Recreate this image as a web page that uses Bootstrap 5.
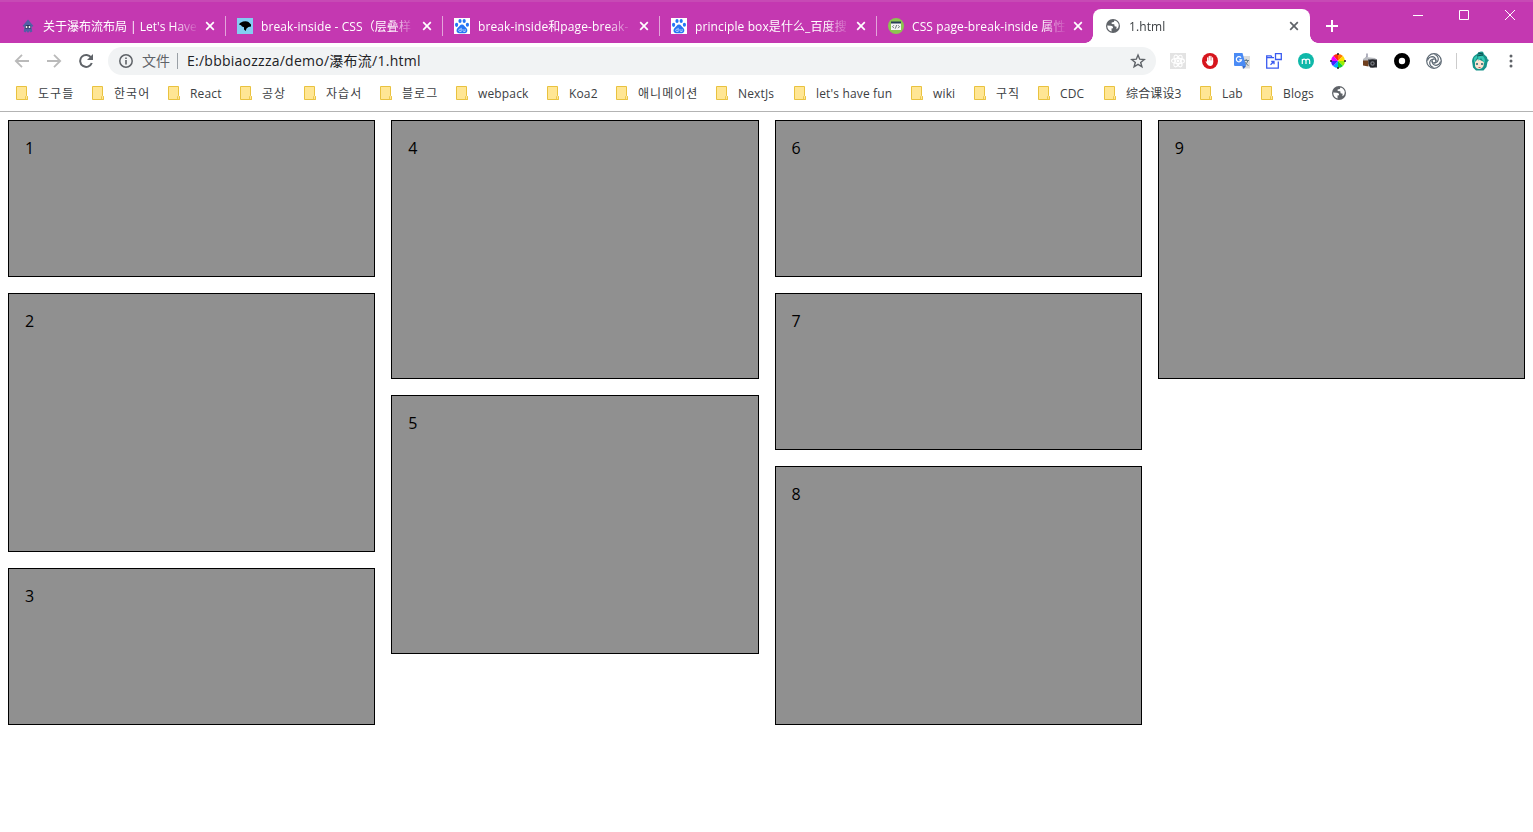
<!DOCTYPE html>
<html lang="zh-CN">
<head>
<meta charset="utf-8">
<title>1.html</title>
<link href="https://cdn.jsdelivr.net/npm/bootstrap@5.3.0/dist/css/bootstrap.min.css" rel="stylesheet">
<style>
body{font-family:"Open Sans","Noto Sans CJK SC",sans-serif;font-size:12px;color:#3c4043;height:832px;overflow:hidden;background:#fff}
svg{display:block;flex:none}
.tabstrip{height:43px;background:#c438b1;border-top:2px solid #c74ab5;padding:7px 0 0 9px}
.tab{width:217px;height:34px;padding:0 9px 0 11px;color:#fff;position:relative}
.tab .title{width:155px;margin:2px 6px 0 8px;letter-spacing:.1px;white-space:nowrap;overflow:hidden;line-height:20px;-webkit-mask-image:linear-gradient(90deg,#000 84%,transparent);mask-image:linear-gradient(90deg,#000 84%,transparent)}
.tab .title.snug{letter-spacing:0;margin-left:7px;width:156px}
.tab.split::after{content:"";position:absolute;right:0;top:7px;width:1px;height:20px;background:#e3a5da}
.tab.current{background:#fff;color:#3c4043;border-radius:8px 8px 0 0;margin-left:-1px;padding-left:12px}
.tab.current::before,.tab.current::after{content:"";position:absolute;bottom:0;width:8px;height:8px}
.tab.current::before{left:-8px;background:radial-gradient(circle at 0 0,transparent 7.5px,#fff 8px)}
.tab.current::after{right:-8px;background:radial-gradient(circle at 100% 0,transparent 7.5px,#fff 8px)}
.tab.current .title{width:154px}
.tab.current .closer{color:#5f6368}
.winctl{gap:30px;margin:-1px 15px 0 auto}
.toolbar{height:36px;padding:0 13px}
.reload{margin-left:14px}
.omnibox{width:1048px;height:28px;border-radius:14px;background:#f1f3f4;margin-left:14px;padding:0 10px;font-size:14px;color:#5f6368}
.omnibox .url{color:#202124;letter-spacing:.25px;margin-top:-1px}
.omnibox .scheme{margin:-2px 0 0 8px}
.omnibox .rule{width:1px;height:16px;background:#9aa0a6;margin:0 9px 0 7px}
.exts{gap:16px;margin-left:14px}
.sep{width:1px;height:16px;margin:0 14px;background:#ccc}
.dots{margin-left:20px}
.bookmarks{height:33px;border-bottom:1px solid #b3b3b3;padding:0 0 4px 15px;display:grid;align-items:center;grid-template-columns:76px 76px 72px 64px 76px 76px 91px 69px 100px 78px 117px 63px 64px 66px 96px 61px 71px 20px}
.bookmarks>div{display:flex;align-items:center;white-space:nowrap;gap:9px;line-height:20px}
.bookmarks span{padding-top:2px;letter-spacing:.15px}
.ko{font-family:"Open Sans","Noto Sans CJK KR",sans-serif}
.bookmarks .ko span{letter-spacing:1.05px}
.fall{gap:16px}
.fall>div{flex:1 1 0}
.tile{height:157px;background:#909090;border:1px solid #000;margin-bottom:16px;padding:16px;font-size:16px;line-height:22px;color:#000}
.tile.tall{height:259px}
</style>
</head>
<body>
<svg width="0" height="0" class="position-absolute">
<defs>
<symbol id="x" viewBox="0 0 10 10"><path d="M1.200 1.200l7.600 7.600M8.800 1.200L1.200 8.800" stroke="currentColor" stroke-width="1.700"/></symbol>
<symbol id="globe" viewBox="0 0 14 14"><circle cx="7" cy="7" r="7" fill="#5f6368"/><path d="M1.200 6.600 4.800 6.700Q7.400 7 7 9.200L5.500 9.500 5.600 12.600Q1.400 11.500 1.200 6.600ZM8.400 1.400 7.800 3 5.600 3.400 5.700 5.100 8.300 5.200 8.600 7.200 10.600 7.700 10.400 10.300Q13 9 12.700 5.500 12 2.300 8.400 1.400Z" fill="#fff"/></symbol>
<symbol id="folder" viewBox="0 0 14 16"><path d="M1.500 1.500h10v9l1 1v3h-11z" fill="#ffe694" stroke="#e9c23f"/><path d="M10.500 14.500v-3l1-1 1 1v3z" fill="#ffe694" stroke="#e9c23f" stroke-width=".8"/></symbol>
<symbol id="paw" viewBox="0 0 16 16"><path fill="#fff" d="M0 0h16v16H0z"/><g fill="#2475f5"><ellipse cx="2.600" cy="6.800" rx="1.600" ry="2.100"/><ellipse cx="6" cy="3" rx="1.600" ry="2.100"/><ellipse cx="10.200" cy="3" rx="1.600" ry="2.100"/><ellipse cx="13.400" cy="6.800" rx="1.600" ry="2"/><path d="M8 6.400c2 0 2.600 2 4.100 3.400 1.900 1.500 1.700 5.400-1.300 5.400H5.100c-3 0-3.200-3.700-1.300-5.400C5.300 8.400 6 6.400 8 6.400z"/></g><path d="M7.200 9.800v3.700H5.900a1.100 1.100 0 0 1 0-2.400h1.300M9 11v1.500q0 1 1 1h1.100V11" stroke="#fff" fill="none" stroke-width=".6"/></symbol>
</defs>
</svg>

<header>
<div class="tabstrip d-flex">
  <div class="tab split d-flex align-items-center">
    <svg width="16" height="16" viewBox="0 0 16 16"><path d="M8 1.500 13.500 8l-2 1 .8 4.500-1.800 1-1-1.500-1 1.500h-1l-1-1.500-1 1.500-1.800-1L4.500 9l-2-1z" fill="#5260a6"/><path d="M5 8q3-2 6 0v2.500H5z" fill="#283154"/><circle cx="6.500" cy="9" r="1" fill="#fff"/><circle cx="9.500" cy="9" r="1" fill="#fff"/></svg>
    <div class="title snug">关于瀑布流布局 | Let's Have</div><svg class="closer" width="10" height="10"><use href="#x"/></svg>
  </div>
  <div class="tab split d-flex align-items-center">
    <svg width="16" height="16" viewBox="0 0 16 16"><path fill="#83cdf2" d="M0 0h16v16H0z"/><path d="M2 6.500 3 5l3-1.500q3.500-.8 5.500.5l2.500 2.500v2L11.500 9l-2 1.500-.8 2.500-1.700-1.500V9.300L5 8.500 4 7.300z"/></svg>
    <div class="title">break-inside - CSS（层叠样</div><svg class="closer" width="10" height="10"><use href="#x"/></svg>
  </div>
  <div class="tab split d-flex align-items-center">
    <svg width="16" height="16"><use href="#paw"/></svg>
    <div class="title">break-inside和page-break-</div><svg class="closer" width="10" height="10"><use href="#x"/></svg>
  </div>
  <div class="tab split d-flex align-items-center">
    <svg width="16" height="16"><use href="#paw"/></svg>
    <div class="title">principle box是什么_百度搜</div><svg class="closer" width="10" height="10"><use href="#x"/></svg>
  </div>
  <div class="tab d-flex align-items-center">
    <svg width="16" height="16" viewBox="0 0 16 16"><circle cx="8" cy="8" r="8" fill="#8cc450"/><path fill="#f5f5f5" d="M3 4h10v8H3z"/><path fill="#263d55" d="M3 3.500h10v2H3z"/><path d="M6 7.200 4.500 8.700 6 10.200M10 7.200 11.500 8.700 10 10.200M8.600 7l-1.200 3.600" stroke="#455" fill="none" stroke-width=".8"/></svg>
    <div class="title">CSS page-break-inside 属性</div><svg class="closer" width="10" height="10"><use href="#x"/></svg>
  </div>
  <div class="tab current d-flex align-items-center">
    <svg width="16" height="16" viewBox="-1 -1 16 16"><use href="#globe" width="14" height="14"/></svg>
    <div class="title">1.html</div><svg class="closer" width="10" height="10"><use href="#x"/></svg>
  </div>
  <svg class="ms-3" width="12" height="34" viewBox="0 0 12 34"><path d="M6 11v12M0 17h12" stroke="#fff" stroke-width="2"/></svg>
  <div class="winctl d-flex">
    <svg width="16" height="16" viewBox="0 0 16 16"><path d="M3 7.500h10" stroke="#fff"/></svg>
    <svg width="16" height="16" viewBox="0 0 16 16"><path d="M3.500 2.500h9v9h-9z" stroke="#fff" fill="none"/></svg>
    <svg width="16" height="16" viewBox="0 0 16 16"><path d="M3 2l10 10M13 2 3 12" stroke="#fff"/></svg>
  </div>
</div>

<div class="toolbar d-flex align-items-center">
  <svg width="18" height="16" viewBox="0 0 18 16"><path d="M16 8H3M9 1.800 2.800 8 9 14.200" fill="none" stroke="#bababa" stroke-width="1.800"/></svg>
  <svg class="ms-3" width="18" height="16" viewBox="0 0 18 16"><path d="M0 8h13M7 1.800 13.200 8 7 14.200" fill="none" stroke="#bababa" stroke-width="1.800"/></svg>
  <svg class="reload" width="15" height="16" viewBox="1 0 15 16"><path d="M13.200 4.600A6 6 0 1 0 13.800 10" fill="none" stroke="#5f6368" stroke-width="2"/><path d="M15 1v6H9z" fill="#5f6368"/></svg>
  <div class="omnibox d-flex align-items-center">
    <svg width="16" height="16" viewBox="0 0 16 16"><circle cx="8" cy="8" r="6.200" fill="none" stroke="#5f6368" stroke-width="1.500"/><path d="M8 7v4.500M8 4.500V6" stroke="#5f6368" stroke-width="1.600"/></svg>
    <span class="scheme">文件</span><span class="rule"></span><span class="url">E:/bbbiaozzza/demo/瀑布流/1.html</span>
    <svg class="ms-auto" width="16" height="16" viewBox="0 0 16 16"><path d="M8 2l1.700 4.200 4.500.3-3.500 2.900 1.200 4.400L8 11.400l-3.900 2.400 1.200-4.400-3.500-2.900 4.500-.3z" fill="none" stroke="#5f6368" stroke-width="1.400"/></svg>
  </div>
  <div class="exts d-flex align-items-center">
    <svg width="16" height="16" viewBox="0 0 16 16"><path fill="#e3e3e3" d="M0 0h16v16H0z"/><g fill="none" stroke="#fff" stroke-width="1.100"><ellipse cx="8" cy="8" rx="6.500" ry="2.600"/><ellipse cx="8" cy="8" rx="6.500" ry="2.600" transform="rotate(60 8 8)"/><ellipse cx="8" cy="8" rx="6.500" ry="2.600" transform="rotate(120 8 8)"/></g><circle cx="8" cy="8" r="1.400" fill="#fff"/></svg>
    <svg width="16" height="16" viewBox="0 0 16 16"><circle cx="8" cy="8" r="8" fill="#d6151d"/><path d="M5.700 9V4.800M7.300 8V3.300M8.900 8V3.500M10.500 9V4.800" stroke="#fff" stroke-width="1.300" stroke-linecap="round"/><path d="M5 7.500h6.200v2.200q-.4 3.300-3 3.300-2 0-3-1.800L3.500 8.500q.8-.7 1.500.2z" fill="#fff"/></svg>
    <svg width="16" height="16" viewBox="0 0 16 16"><path fill="#dcdcdc" d="M6 3h10v12.500H8z"/><path d="M9.500 7.500h5.500M12.200 6v1.500M14 7.500q-1 3.500-4 5M10.500 8.500q1.500 3 4 4" stroke="#667d86" fill="none"/><path fill="#4a8bf5" d="M0 0h8.500l3.500 13H1q-1 0-1-1z"/><path fill="#3469c8" d="M8.300 13H12L9.600 16z"/><path d="M7 4.600A2.600 2.600 0 1 0 7.500 6.800H5.200" fill="none" stroke="#fff" stroke-width="1.200"/></svg>
    <svg width="16" height="16" viewBox="0 0 16 16"><g fill="none" stroke="#3a5bf0" stroke-width="1.300"><path d="M8 4.600H6L5 2.800H.7v12.400h11.600V8.500M.7 4.600H6M9.500.7h5.800v5.800H9.500zM4.500 11.800l3.200-3M5.200 8.500h2.800v2.800"/></g></svg>
    <svg width="16" height="16" viewBox="0 0 16 16"><circle cx="8" cy="8" r="8" fill="#0fb8a9"/><path d="M4.300 11V6M4.300 8q0-1.800 1.800-1.800T8 8v3M8 8q0-1.800 1.800-1.800T11.700 8v3" stroke="#fff" stroke-width="1.200" fill="none"/></svg>
    <svg width="16" height="16" viewBox="0 0 16 16"><path d="M8 8V1Q5 .8 3.400 2.800z" fill="#ff2b10"/><path d="M8 8 8 1q3 0 5 2z" fill="#ff7b00"/><path d="M8 8l5-5q2 2 2 5z" fill="#fd0"/><path d="M8 8h7q0 3-2 5z" fill="#9e0"/><path d="M8 8l5 5q-2 2-5 2z" fill="#1c3"/><path d="M8 8v7q-3 0-5-2z" fill="#0af"/><path d="M8 8l-5 5q-2-2-2-5z" fill="#42f"/><path d="M8 8H1q0-3 2.400-5.200z" fill="#e0f"/><path d="M8 0v2M8 14v2M0 8h2M14 8h2" stroke="#222" stroke-width="1.500"/></svg>
    <svg width="16" height="16" viewBox="0 0 16 16"><path d="M5 .5v3l-1 1.500" stroke="#99a" stroke-width="1.500" fill="none"/><path fill="#b9bbc0" d="M1 6l3-2 9 1 2 2v4H1z"/><path fill="#70401f" d="M1 7.500h5.500v6L1 12.500z"/><path fill="#303238" d="M6 6.500h9v8H8z"/><circle cx="10.500" cy="10.500" r="4" fill="#24262a"/><circle cx="10.500" cy="10.500" r="2.200" fill="#777a82"/><circle cx="10.500" cy="10.500" r="1" fill="#222"/></svg>
    <svg width="16" height="16" viewBox="0 0 16 16"><circle cx="8" cy="8" r="5.600" fill="none" stroke="#000" stroke-width="4.800"/></svg>
    <svg width="16" height="16" viewBox="0 0 16 16"><g fill="none" stroke="#5c6873" stroke-width="1.200"><circle cx="8" cy="8" r="7.300"/><circle cx="8" cy="8" r="2"/><path id="arm" d="M10 8Q9.600 3.800 6 3.700 2.600 4 1.500 7.500"/><use href="#arm" transform="rotate(90 8 8)"/><use href="#arm" transform="rotate(180 8 8)"/><use href="#arm" transform="rotate(270 8 8)"/></g></svg>
  </div>
  <div class="sep"></div>
  <svg width="18" height="20" viewBox="0 0 18 20"><path d="M6 3Q8-.5 12 .8l1 2.500q3 2 3.500 5L18 9l-1.500 2-1 5-3 3.500H5L2 16.500 1 10Q1.500 5 6 3z" fill="#17948a"/><path d="M4 11l3-3 6 3-.5 4Q11 18 8 18T4 15z" fill="#fde3d0"/><path d="M3 12l4-7 .5 5L10 7l3.500 5.500.5-3Q13 4 9 4T3 7z" fill="#35c9b4"/><path d="M6 12v2M11 12v2" stroke="#236b70" stroke-width="1.500"/><path d="M7 2l5 1M6 5l6-1" stroke="#0b4f50"/><path d="M7.500 16.500h2" stroke="#b55"/></svg>
  <svg class="dots" width="4" height="16" viewBox="0 0 4 16"><g fill="#5f6368"><circle cx="2" cy="3" r="1.500"/><circle cx="2" cy="8" r="1.500"/><circle cx="2" cy="13" r="1.500"/></g></svg>
</div>

<nav class="bookmarks">
  <div class="ko"><svg width="14" height="16"><use href="#folder"/></svg><span>도구들</span></div>
  <div class="ko"><svg width="14" height="16"><use href="#folder"/></svg><span>한국어</span></div>
  <div><svg width="14" height="16"><use href="#folder"/></svg><span>React</span></div>
  <div class="ko"><svg width="14" height="16"><use href="#folder"/></svg><span>공상</span></div>
  <div class="ko"><svg width="14" height="16"><use href="#folder"/></svg><span>자습서</span></div>
  <div class="ko"><svg width="14" height="16"><use href="#folder"/></svg><span>블로그</span></div>
  <div><svg width="14" height="16"><use href="#folder"/></svg><span>webpack</span></div>
  <div><svg width="14" height="16"><use href="#folder"/></svg><span>Koa2</span></div>
  <div class="ko"><svg width="14" height="16"><use href="#folder"/></svg><span>애니메이션</span></div>
  <div><svg width="14" height="16"><use href="#folder"/></svg><span>NextJs</span></div>
  <div><svg width="14" height="16"><use href="#folder"/></svg><span>let's have fun</span></div>
  <div><svg width="14" height="16"><use href="#folder"/></svg><span>wiki</span></div>
  <div class="ko"><svg width="14" height="16"><use href="#folder"/></svg><span>구직</span></div>
  <div><svg width="14" height="16"><use href="#folder"/></svg><span>CDC</span></div>
  <div><svg width="14" height="16"><use href="#folder"/></svg><span>综合课设3</span></div>
  <div><svg width="14" height="16"><use href="#folder"/></svg><span>Lab</span></div>
  <div><svg width="14" height="16"><use href="#folder"/></svg><span>Blogs</span></div>
  <div><svg width="16" height="16" viewBox="-1 -1 16 16"><use href="#globe" width="14" height="14"/></svg></div>
</nav>
</header>

<main class="fall d-flex p-2">
  <div><div class="tile">1</div><div class="tile tall">2</div><div class="tile">3</div></div>
  <div><div class="tile tall">4</div><div class="tile tall">5</div></div>
  <div><div class="tile">6</div><div class="tile">7</div><div class="tile tall">8</div></div>
  <div><div class="tile tall">9</div></div>
</main>
<script src="https://cdn.jsdelivr.net/npm/bootstrap@5.3.0/dist/js/bootstrap.bundle.min.js"></script>
</body>
</html>
